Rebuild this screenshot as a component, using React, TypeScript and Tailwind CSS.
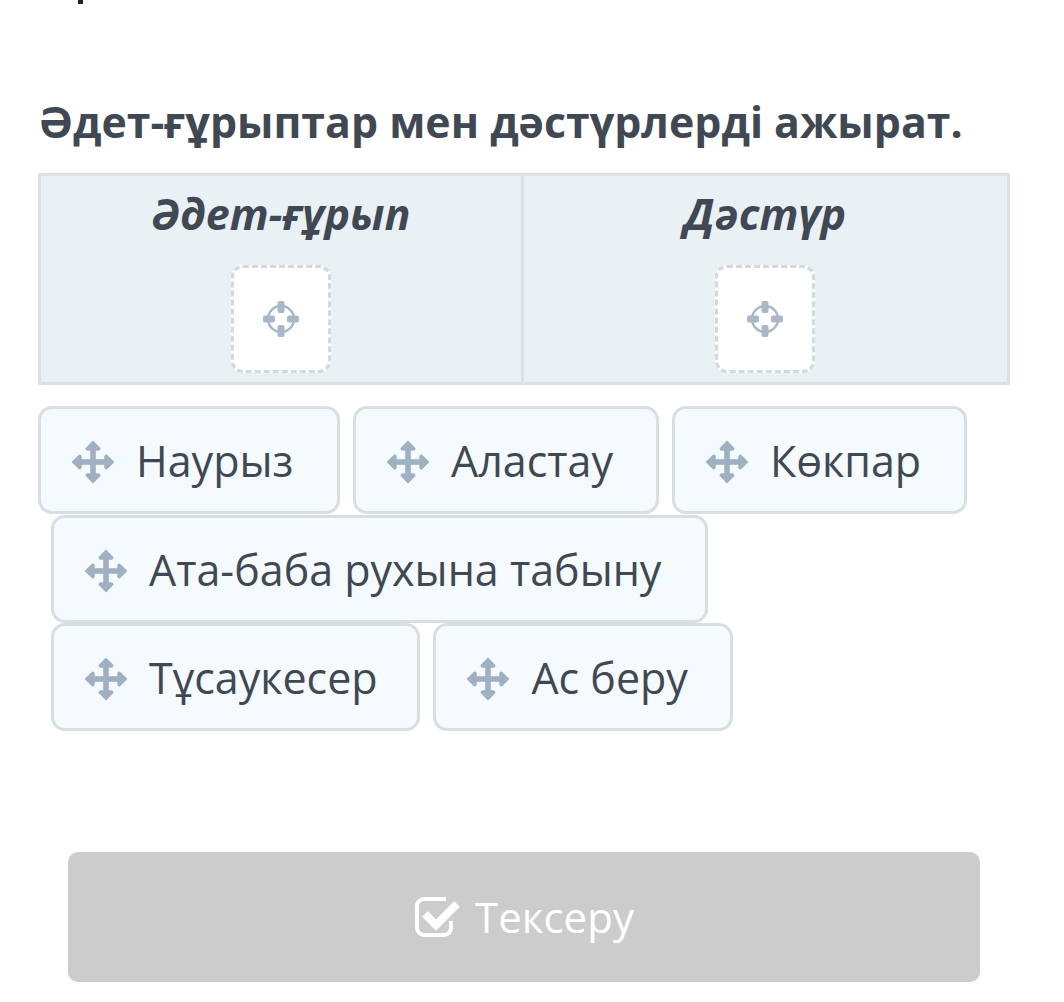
import React from "react";

const items = [
  { label: "Наурыз", width: "w-[302px]" },
  { label: "Аластау", width: "w-[306px]" },
  { label: "Көкпар", width: "w-[295px]" },
  { label: "Ата-баба рухына табыну", width: "w-[657px]" },
  { label: "Тұсаукесер", width: "w-[369.4px]" },
  { label: "Ас беру", width: "w-[300px]" },
];

function MoveIcon() {
  return (
    <svg viewBox="0 0 44 44" className="w-[44px] h-[44px] mt-[2px] shrink-0 text-[#9fb1c1]" fill="currentColor">
      <path d="M19.200 7h5.600v30h-5.600z" />
      <path d="M7 19.200h30v5.600H7z" />
      <path d="M22 1.500l6.800 7-1 1.500H16.200l-1-1.500z" stroke="currentColor" strokeWidth="1.500" strokeLinejoin="round" />
      <path d="M22 42.500l6.800-7-1-1.500H16.200l-1 1.500z" stroke="currentColor" strokeWidth="1.500" strokeLinejoin="round" />
      <path d="M1.500 22l7-6.800 1.500 1v11.600l-1.500 1z" stroke="currentColor" strokeWidth="1.500" strokeLinejoin="round" />
      <path d="M42.500 22l-7-6.800-1.500 1v11.600l1.500 1z" stroke="currentColor" strokeWidth="1.500" strokeLinejoin="round" />
    </svg>
  );
}

function CheckIcon() {
  return (
    <svg viewBox="0 0 46 40" className="w-[46px] h-[40px] ml-px shrink-0" fill="none" stroke="currentColor">
      <path d="M31 2H9a7 7 0 0 0-7 7v22a7 7 0 0 0 7 7h20a7 7 0 0 0 7-7v-7" strokeWidth="4" />
      <path d="M10 17l11 11L42 7" strokeWidth="8" />
    </svg>
  );
}

function Target() {
  return (
    <svg viewBox="0 0 38 38" className="w-[38px] h-[38px] text-[#a9b8c6]" fill="none">
      <circle cx="19" cy="19" r="13" stroke="currentColor" strokeWidth="2.500" />
      <rect x="15.500" y="1" width="7" height="12" rx="2" fill="currentColor" />
      <rect x="15.500" y="25" width="7" height="12" rx="2" fill="currentColor" />
      <rect x="1" y="15.500" width="12" height="7" rx="2" fill="currentColor" />
      <rect x="25" y="15.500" width="12" height="7" rx="2" fill="currentColor" />
    </svg>
  );
}

function Column({ title, className }: { title: string; className: string }) {
  return (
    <div className={`${className} flex flex-col items-center pt-[8px]`}>
      <div className="text-[43px] leading-[60px] font-bold italic text-[#3f4853]">{title}</div>
      <div className="mt-[21px] w-[100px] h-[108px] bg-white rounded-[12px] border-[3px] border-dashed border-[#d3dade] flex items-center justify-center">
        <Target />
      </div>
    </div>
  );
}

export default function App() {
  return (
    <div className="w-[1064px] h-[1002px] bg-white overflow-hidden font-['Open_Sans',sans-serif]">
      {/* clipped line from the text above */}
      <div className="h-[4px] pl-[78px]">
        <div className="w-[5px] h-[4px] bg-[#222]" />
      </div>

      <div className="pl-[38px] pr-[54px]">
        <h1 className="mt-[86px] h-[64px] text-[42.85px] leading-[64px] font-bold text-[#3f4853] whitespace-nowrap">
          Әдет-ғұрыптар мен дәстүрлерді ажырат.
        </h1>

        <div className="mt-[19px] h-[212px] flex bg-[#e9f1f5] border-[3px] border-[#dbe2e6]">
          <Column title="Әдет-ғұрып" className="w-[480px]" />
          <div className="w-[3px] bg-[#dbe2e6]" />
          <Column title="Дәстүр" className="flex-1 pr-px" />
        </div>

        <div className="mt-[21px] flex flex-wrap gap-y-[0.5px]">
          {items.map((item, idx) => (
            <div
              key={item.label}
              className={`${item.width} ${idx === 0 ? "" : "ml-[13px]"} h-[108px] flex items-center pl-[30px] pt-[2px] gap-[21px] bg-[#f5fafe] border-[3px] border-[#d8dfe3] rounded-[14px]`}
            >
              <MoveIcon />
              <span className="text-[43px] leading-[60px] text-[#3f4853] whitespace-nowrap">{item.label}</span>
            </div>
          ))}
        </div>

        <div className="mt-[121px] ml-[30px] w-[912px] h-[130px] bg-[#cccccc] rounded-[10px] flex items-center justify-center gap-[14px] text-white">
          <CheckIcon />
          <span className="text-[42px] leading-[60px]">Тексеру</span>
        </div>
      </div>
    </div>
  );
}
